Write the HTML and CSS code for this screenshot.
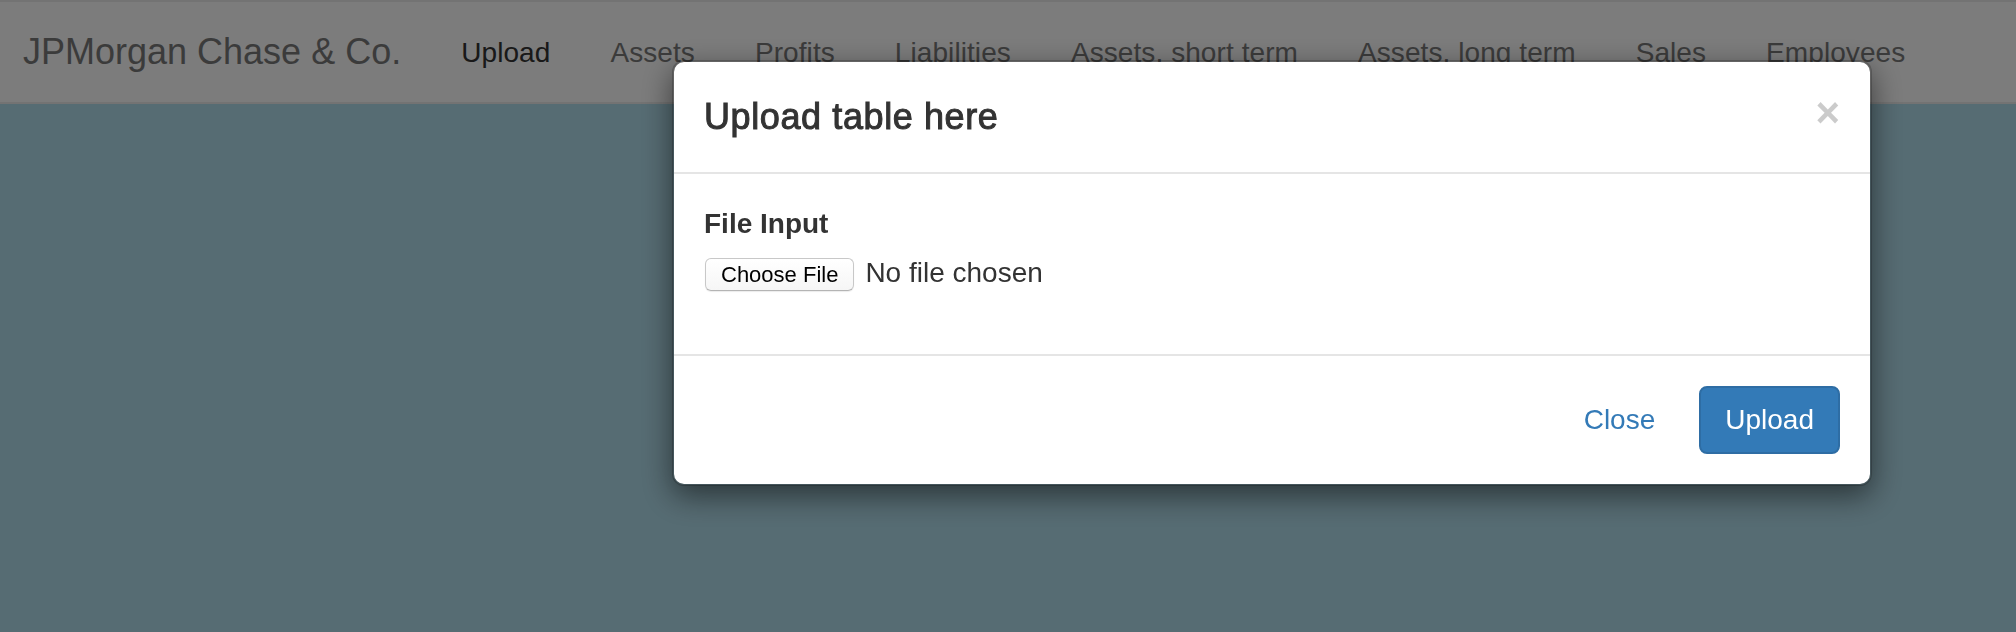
FILE: index.html
```html
<!DOCTYPE html>
<html lang="en">
<head>
<meta charset="utf-8">
<title>JPMorgan Chase &amp; Co.</title>
<link rel="stylesheet" href="styles.css">
</head>
<body>
  <nav class="navbar">
    <a class="brand" href="#">JPMorgan Chase &amp; Co.</a>
    <ul class="nav">
      <li class="active"><a href="#">Upload</a></li>
      <li><a href="#">Assets</a></li>
      <li><a href="#">Profits</a></li>
      <li><a href="#">Liabilities</a></li>
      <li><a href="#">Assets, short term</a></li>
      <li><a href="#">Assets, long term</a></li>
      <li><a href="#">Sales</a></li>
      <li><a href="#">Employees</a></li>
    </ul>
  </nav>

  <div class="backdrop"></div>

  <div class="modal">
    <div class="dialog">
      <div class="content">
        <div class="header">
          <h4 class="title">Upload table here</h4>
          <button class="close" type="button">&times;</button>
        </div>
        <div class="body">
          <label class="label">File Input</label>
          <div class="file-row">
            <span class="file-btn">Choose File</span>
            <span class="file-name">No file chosen</span>
          </div>
        </div>
        <div class="footer">
          <button class="btn btn-link" type="button">Close</button>
          <button class="btn btn-primary" type="button">Upload</button>
        </div>
      </div>
    </div>
  </div>
</body>
</html>
```

FILE: styles.css
```css
html, body {
  margin: 0;
  height: 100%;
}

body {
  background: #add8e6;
  font-family: "Liberation Sans", Arial, Helvetica, sans-serif;
  color: #333;
  overflow: hidden;
}

/* Navbar */
.navbar {
  display: flex;
  box-sizing: border-box;
  height: 104px;
  background: #f8f8f8;
  border-top: 2px solid #e7e7e7;
  border-bottom: 2px solid #e7e7e7;
}

.brand {
  display: block;
  padding: 30px 30px 0 23px;
  font-size: 36px;
  line-height: 40px;
  color: #777;
  text-decoration: none;
  white-space: nowrap;
}

.nav {
  display: flex;
  list-style: none;
  margin: 0;
  padding: 0;
}

.nav a {
  display: block;
  padding: 31px 30px 0;
  font-size: 28px;
  line-height: 40px;
  letter-spacing: 0.08px;
  color: #777;
  text-decoration: none;
  white-space: nowrap;
}

.nav .active a {
  color: #333;
}

/* Backdrop + modal */
.backdrop {
  position: fixed;
  inset: 0;
  background: rgba(0, 0, 0, 0.5);
}

.modal {
  position: fixed;
  inset: 0;
}

.dialog {
  width: 1200px;
  margin: 60px 0 0 672px;
}

.content {
  background: #fff;
  background-clip: padding-box;
  border: 2px solid rgba(0, 0, 0, 0.2);
  border-radius: 12px;
  box-shadow: 0 10px 30px rgba(0, 0, 0, 0.5);
}

.header {
  display: flex;
  justify-content: space-between;
  align-items: flex-start;
  padding: 30px;
  border-bottom: 2px solid #e5e5e5;
}

.title {
  margin: 0;
  font-size: 36px;
  line-height: 50px;
  font-weight: normal;
  letter-spacing: 0.6px;
  color: #333;
  -webkit-text-stroke: 1px #333;
}

.close {
  margin: 0;
  padding: 0;
  border: 0;
  background: transparent;
  font-family: "Liberation Sans", Arial, sans-serif;
  font-size: 42px;
  font-weight: bold;
  line-height: 1;
  color: #000;
  opacity: 0.2;
  text-shadow: 0 2px 0 #fff;
}

.body {
  padding: 30px;
}

.label {
  display: block;
  margin-bottom: 10px;
  font-size: 28px;
  line-height: 40px;
  font-weight: bold;
  color: #333;
}

.file-row {
  display: flex;
  align-items: baseline;
  margin-bottom: 33px;
}

.file-btn {
  margin: 4px 0 0 1px;
  padding: 0 15px;
  font-size: 22px;
  line-height: 31px;
  color: #000;
  background: linear-gradient(#ffffff, #f6f6f6);
  border: 1px solid #c8c8c8;
  border-bottom-color: #b4b4b4;
  border-radius: 6px;
  box-shadow: 0 1px 1px rgba(0, 0, 0, 0.08);
}

.file-name {
  margin-left: 11px;
  font-size: 28px;
  line-height: 32px;
  color: #333;
}

.footer {
  display: flex;
  justify-content: flex-end;
  gap: 18px;
  padding: 30px;
  border-top: 2px solid #e5e5e5;
}

.btn {
  padding: 12px 24px;
  font-family: "Liberation Sans", Arial, sans-serif;
  font-size: 28px;
  line-height: 40px;
  border: 2px solid transparent;
  border-radius: 8px;
  background: transparent;
}

.btn-link {
  color: #337ab7;
}

.btn-primary {
  color: #fff;
  background: #337ab7;
  border-color: #2e6da4;
}
```
